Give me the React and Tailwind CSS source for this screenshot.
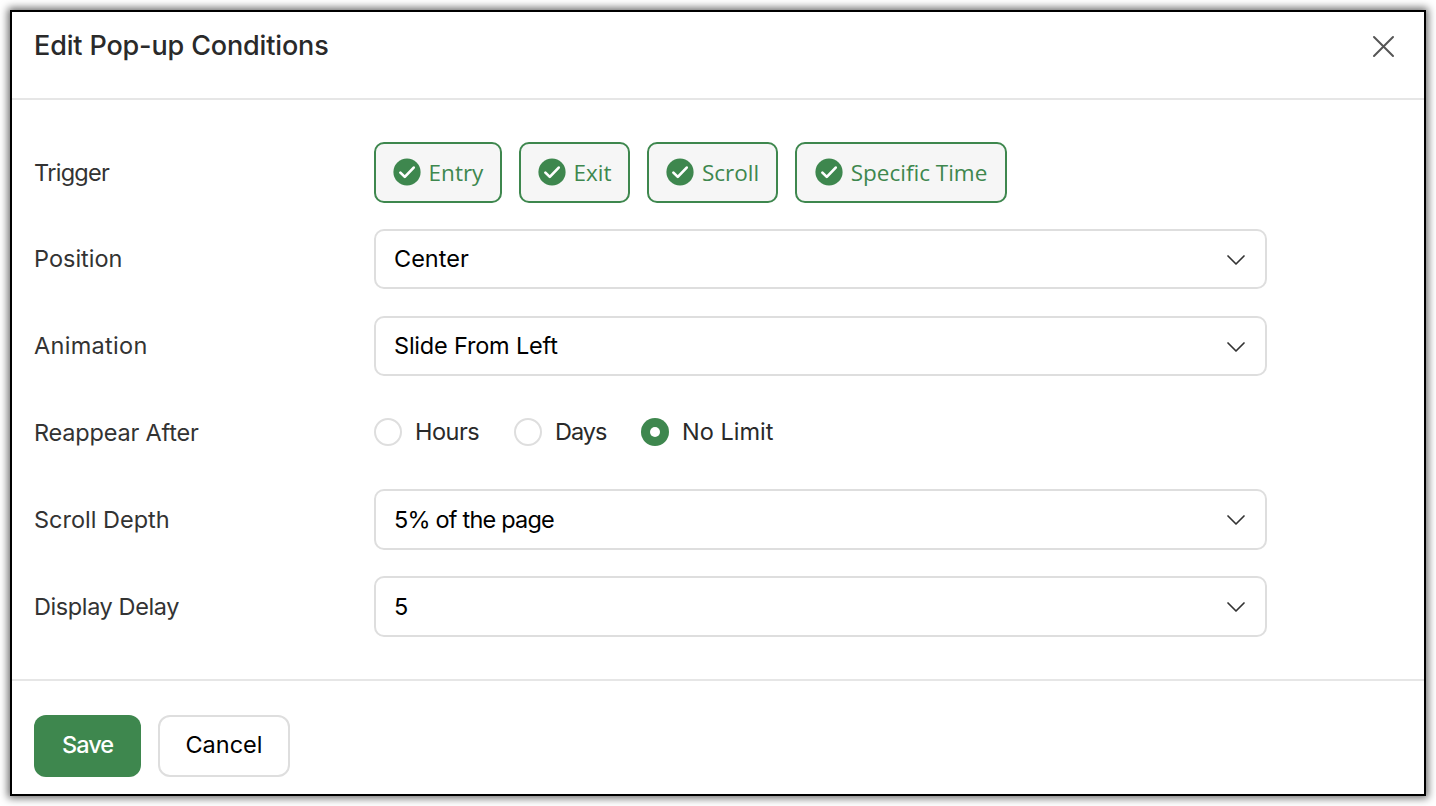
import React from "react";

function Check() {
  return (
    <svg width="28" height="28" viewBox="0 0 28 28" className="shrink-0">
      <circle cx="14" cy="14" r="13.6" fill="#3e874e" />
      <path d="M7.4 14.6l4.4 4.3 8.9-9.3" fill="none" stroke="#fff" strokeWidth="2.7" strokeLinecap="round" strokeLinejoin="round" />
    </svg>
  );
}

function Chip({ children, w }) {
  return (
    <div className={`${w} h-[61px] flex items-center justify-center gap-[8px] rounded-[10px] border-2 border-[#3e874e] bg-[#f6f6f6] text-[#3e874e] text-[22.5px] font-['Open_Sans',sans-serif]`}>
      <Check />
      <span className="translate-y-[1px]">{children}</span>
    </div>
  );
}

function Select({ value, track = "" }) {
  return (
    <div className="w-[893px] h-[60.6px] flex items-center justify-between pl-[19px] pr-[18px] rounded-[10px] border-2 border-[#dedede] bg-white text-black text-[23.5px]">
      <span className={`-ml-[1px] ${track}`}>{value}</span>
      <svg width="22" height="12" viewBox="0 0 22 12" fill="none" stroke="#333" strokeWidth="1.7" strokeLinecap="round" strokeLinejoin="round" className="translate-y-[1px]">
        <path d="M3 2l8 8 8-8" />
      </svg>
    </div>
  );
}

function Radio({ label, on, cls, track = "" }) {
  return (
    <div className={`flex items-center ${cls}`}>
      {on ? (
        <span className="w-7 h-7 rounded-full bg-[#3e874e] flex items-center justify-center mr-[13px]">
          <span className="w-[10px] h-[10px] rounded-full bg-white" />
        </span>
      ) : (
        <span className="w-7 h-7 rounded-full border-2 border-[#dedede] mr-[13px]" />
      )}
      <span className={`text-[23.5px] text-[#2a2a2a] ${track}`}>{label}</span>
    </div>
  );
}

function Row({ label, track = "", children }) {
  return (
    <div className="flex items-center h-[60.6px]">
      <div className={`w-[340px] text-[23.5px] text-[#333] -translate-y-[0.2px] ${track}`}>{label}</div>
      {children}
    </div>
  );
}

export default function App() {
  return (
    <div className="w-[1436px] h-[806px] bg-white pt-[10px] pl-[10px] font-['Inter',sans-serif] overflow-hidden">
      <div className="w-[1416px] h-[786px] border-2 border-black bg-white flex flex-col shadow-[0_0_8px_2px_rgba(0,0,0,0.6)]">
        <div className="h-[88px] shrink-0 flex items-center justify-between pl-[22px] pr-[29px] pb-[19px] border-b-2 border-[#e6e6e6]">
          <div className="text-[27px] font-medium text-[#2a2a2a] tracking-[-0.15px] translate-y-[1px]">Edit Pop-up Conditions</div>
          <svg width="24" height="24" viewBox="0 0 24 24" fill="none" stroke="#555" strokeWidth="2" strokeLinecap="round">
            <path d="M3 3l19 19M22 3L3 22" />
          </svg>
        </div>
        <div className="flex-1 pl-[22px] pt-[42px] flex flex-col gap-[26.2px]">
          <Row label="Trigger" track="tracking-[-0.7px]">
            <div className="flex gap-[17px]">
              <Chip w="w-[128px]">Entry</Chip>
              <Chip w="w-[111px]">Exit</Chip>
              <Chip w="w-[131px]">Scroll</Chip>
              <Chip w="w-[212px]">Specific Time</Chip>
            </div>
          </Row>
          <Row label="Position"><Select value="Center" /></Row>
          <Row label="Animation" track="tracking-[0.3px]"><Select value="Slide From Left" track="tracking-[-0.2px]" /></Row>
          <Row label="Reappear After" track="tracking-[-0.2px]">
            <div className="flex items-center -translate-y-[1px]">
              <Radio label="Hours" cls="w-[140px]" track="tracking-[-0.5px]" />
              <Radio label="Days" cls="w-[127px]" track="tracking-[-1px]" />
              <Radio label="No Limit" on />
            </div>
          </Row>
          <Row label="Scroll Depth"><Select value="5% of the page" track="tracking-[-0.8px]" /></Row>
          <Row label="Display Delay" track="tracking-[-0.4px]"><Select value="5" /></Row>
        </div>
        <div className="h-[115px] shrink-0 border-t-2 border-[#e6e6e6] flex items-center gap-[17px] pl-[22px] pt-[17px]">
          <button className="w-[107px] h-[62px] rounded-[12px] bg-[#3e874e] text-white text-[23.5px] font-medium tracking-[-1px] pb-[2px]">Save</button>
          <button className="w-[132px] h-[62px] rounded-[12px] border-2 border-[#dedede] bg-white text-black text-[23.5px] pb-[2px]">Cancel</button>
        </div>
      </div>
    </div>
  );
}
